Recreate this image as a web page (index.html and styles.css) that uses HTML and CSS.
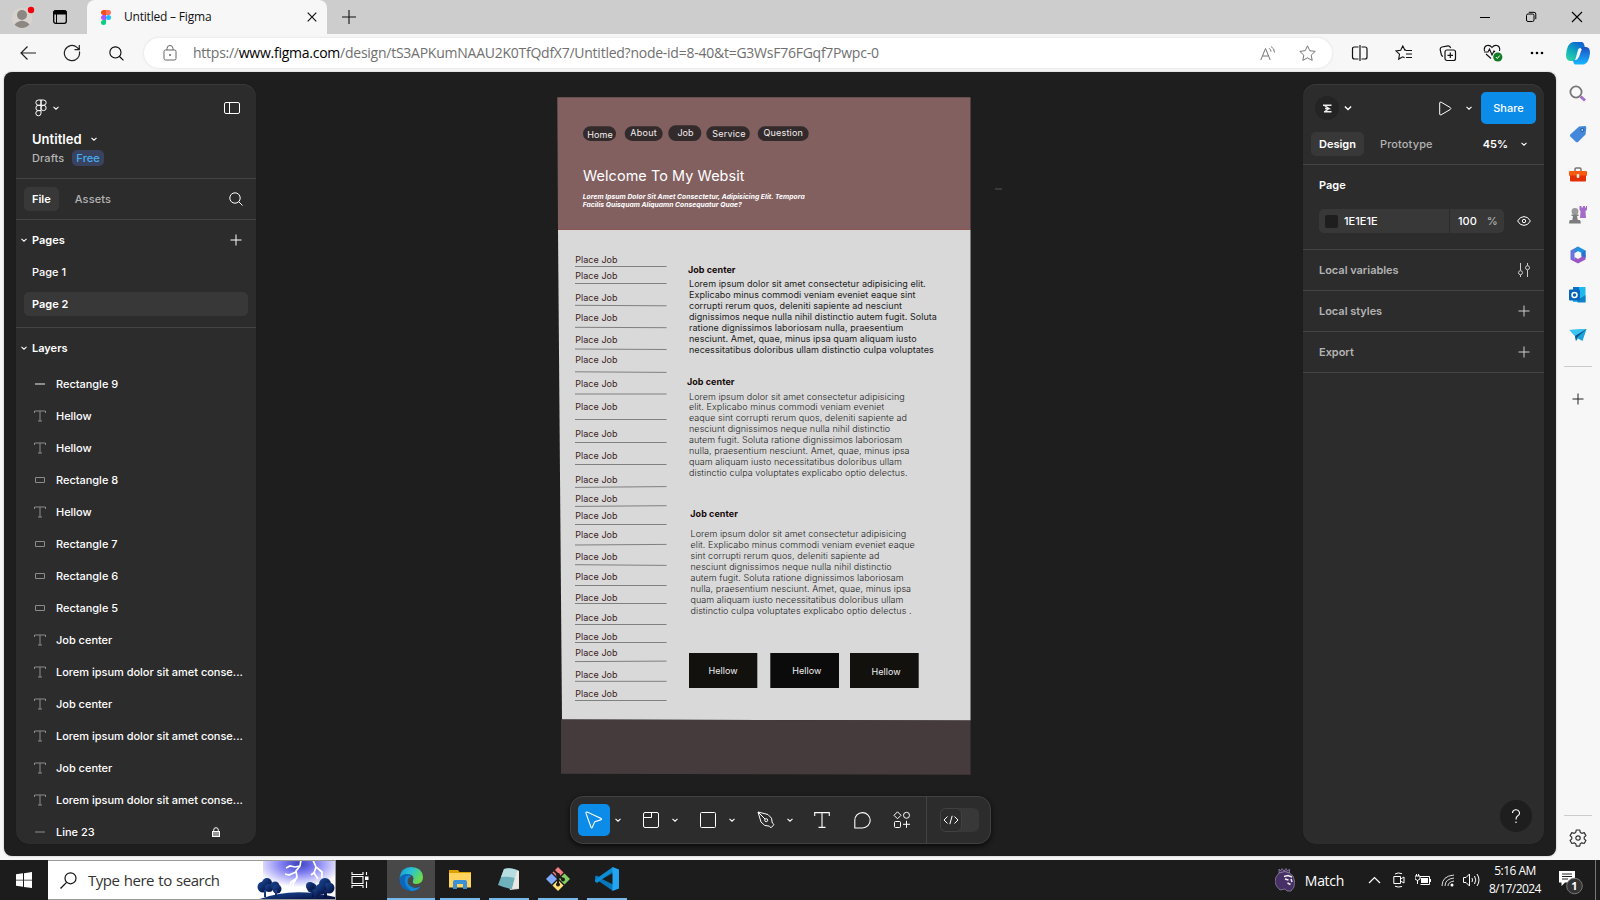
FILE: index.html
```html
<!DOCTYPE html>
<html lang="en">
<head>
<meta charset="utf-8">
<title>Untitled – Figma</title>
<link rel="stylesheet" href="styles.css">
</head>
<body>
<svg class="defs" width="0" height="0">
  <defs>
    <symbol id="chev" viewBox="0 0 8 8"><path d="M1.500 2.800 4 5.200 6.500 2.800" fill="none" stroke="currentColor" stroke-width="1.100"/></symbol>
    <symbol id="plus" viewBox="0 0 12 12"><path d="M6 .5v11M.5 6h11" fill="none" stroke="currentColor"/></symbol>
    <symbol id="mag" viewBox="0 0 14 14"><circle cx="6" cy="6" r="5.200" fill="none" stroke="currentColor"/><path d="m9.800 9.800 3.700 3.700" stroke="currentColor"/></symbol>
    <symbol id="lt" viewBox="0 0 12 12"><path d="M.5 3V1h11v2M6 1v10M4 11h4" fill="none" stroke="currentColor"/></symbol>
    <symbol id="lr" viewBox="0 0 12 12"><path d="M1.500 3.500h9v5h-9z" fill="none" stroke="currentColor"/></symbol>
    <symbol id="ll" viewBox="0 0 12 12"><path d="M1 6h10" stroke="currentColor"/></symbol>
    <symbol id="lb" viewBox="0 0 12 12"><path d="M1 6h10" stroke="currentColor" stroke-width="2"/></symbol>
  </defs>
</svg>

<header class="tabstrip">
  <svg class="avatar" width="24" height="26" viewBox="0 0 24 26"><circle cx="11" cy="14" r="10.500" fill="#d8d3cf"/><circle cx="11" cy="11" r="5" fill="#8d8782"/><path d="M3.500 20.500Q11 13 18.500 20.500A10 10 0 0 1 3.500 20.500" fill="#8d8782"/><circle cx="20" cy="6" r="3.200" fill="#f60010"/></svg>
  <svg class="wsicon" width="14" height="14" viewBox="0 0 14 14"><rect x=".7" y=".7" width="12.600" height="12.600" rx="2" fill="none" stroke="#000" stroke-width="1.300"/><path d="M1 1h12v3H1zM3.500 4v9" stroke="#000"/></svg>
  <div class="tab">
    <svg width="10" height="15" viewBox="0 0 10 15"><path d="M5 0H2.500a2.500 2.500 0 0 0 0 5H5z" fill="#f24e1e"/><path d="M5 0h2.500a2.500 2.500 0 0 1 0 5H5z" fill="#ff7262"/><path d="M5 5H2.500a2.500 2.500 0 0 0 0 5H5z" fill="#a259ff"/><circle cx="7.500" cy="7.500" r="2.500" fill="#1abcfe"/><path d="M5 10H2.500A2.500 2.500 0 1 0 5 12.500z" fill="#0acf83"/></svg>
    <span class="tabtitle">Untitled – Figma</span>
    <svg width="10" height="10" viewBox="0 0 10 10"><path d="m.7.7 8.600 8.600M9.300.7.7 9.300" stroke="#111" stroke-width="1.200"/></svg>
  </div>
  <svg class="newtab" width="14" height="14" viewBox="0 0 14 14"><path d="M7 0v14M0 7h14" stroke="#111" stroke-width="1.100"/></svg>
  <div class="winctl">
    <svg width="12" height="12" viewBox="0 0 12 12"><path d="M1 6.500h10" stroke="#000"/></svg>
    <svg width="12" height="12" viewBox="0 0 12 12"><rect x="1.500" y="3" width="7.500" height="7.500" rx="1.500" fill="none" stroke="#000"/><path d="M3.800 1.300H9q1.800 0 1.800 1.800v5" fill="none" stroke="#000"/></svg>
    <svg width="12" height="12" viewBox="0 0 12 12"><path d="m1 1 10 10M11 1 1 11" stroke="#000" stroke-width="1.100"/></svg>
  </div>
</header>

<div class="navbar">
  <svg class="back" width="16" height="14" viewBox="0 0 16 14"><path d="M16 7H1M7.500.5 1 7l6.500 6.500" fill="none" stroke="#222" stroke-width="1.200"/></svg>
  <svg class="reload" width="18" height="18" viewBox="0 0 18 18"><path d="M16.400 7.500A7.600 7.600 0 1 1 14 3.400L16.300 5.500M16.300 1v4.700h-4.800" fill="none" stroke="#222" stroke-width="1.200"/></svg>
  <svg class="find" width="15" height="15"><use href="#mag"/></svg>
  <div class="address">
    <svg width="14" height="16" viewBox="0 0 14 16"><rect x="1" y="5" width="12" height="10" rx="1.500" fill="none" stroke="#666"/><path d="M4 5V3.500a3 3 0 0 1 6 0V5" fill="none" stroke="#666"/><circle cx="7" cy="10" r="1" fill="#666"/></svg>
    <span class="url">https://<b>www.figma.com</b>/design/tS3APKumNAAU2K0TfQdfX7/Untitled?node-id=8-40&amp;t=G3WsF76FGqf7Pwpc-0</span>
    <svg class="aloud" width="16" height="15" viewBox="0 0 16 15"><path d="M.8 14 5.500 2.500 10.200 14M2.500 10h6M9 2.200q2 1.300 2 3.500M11 .5q3.500 2 3.500 6" fill="none" stroke="#777"/></svg>
    <svg width="17" height="16" viewBox="0 0 17 16"><path d="m8.500.8 2.300 4.900 5.400.7-4 3.700 1 5.300-4.700-2.600-4.700 2.600 1-5.300-4-3.700 5.400-.7z" fill="none" stroke="#777"/></svg>
  </div>
  <div class="edgeicons">
    <svg width="18" height="16" viewBox="0 0 18 16"><path d="M7.500 2H3.500Q1.500 2 1.500 4v8q0 2 2 2h4M10.500 2h3.500q2 0 2 2v8q0 2-2 2h-3.500M9 0v16" fill="none" stroke="#111" stroke-width="1.200"/></svg>
    <svg width="18" height="16" viewBox="0 0 18 16"><path d="M11 4.700 9.800 5 7.800.9 5.700 5.200l-4.800.7 3.600 3.300-.8 4.900 4.100-2.300 1.800 1M10.500 5.500H17M11 9h6M11 12.500h6" fill="none" stroke="#111" stroke-width="1.100"/></svg>
    <svg width="18" height="17" viewBox="0 0 18 17"><rect x="6" y="5" width="10.500" height="10.500" rx="2" fill="none" stroke="#111" stroke-width="1.200"/><path d="M11.300 7.500v5.500M8.500 10.300H14M4 11.500Q2.700 11 2.300 9.500L1.200 4.600Q1 2.500 3 2l6-1.200q2-.2 2.700 2.200" fill="none" stroke="#111" stroke-width="1.200"/></svg>
    <svg width="20" height="18" viewBox="0 0 20 18"><path d="M1.500 7Q.5 2.500 4 1.500 7 .8 9 3.500 11 .8 14 1.500q3.500 1 2.500 5.500M1 8h4l1.500-3 2.500 6 2-4 1 1M3 10l5 4.500" fill="none" stroke="#111" stroke-width="1.100"/><circle cx="14.800" cy="13" r="4.600" fill="#107c25"/><path d="m12.800 13 1.500 1.500 2.500-3" fill="none" stroke="#fff"/></svg>
    <svg width="16" height="16" viewBox="0 0 16 16"><circle cx="3" cy="8" r="1.300"/><circle cx="8" cy="8" r="1.300"/><circle cx="13" cy="8" r="1.300"/></svg>
  </div>
  <svg class="copilot" width="24" height="23" viewBox="0 0 24 23"><defs><linearGradient id="cg" x1="0" y1="1" x2=".6" y2="0"><stop stop-color="#35d9a0"/><stop offset=".5" stop-color="#10aebd"/><stop offset="1" stop-color="#1067d4"/></linearGradient><linearGradient id="ch" x1="0" y1="0" x2="0" y2="1"><stop stop-color="#1a4fc4"/><stop offset="1" stop-color="#18b7ff"/></linearGradient></defs><path d="M7 0h9q2 0 3 6h-4.500q-2 0-2.500 2l-2.500 9q-.8 2-3 2H5Q0 19 0 13 1 1 7 0" fill="url(#cg)"/><path d="M18 5h2q4 0 4 6-1 10-6 11.500H9.500q-2 0-2.500-4.500h2.500q2 0 2.500-2L14.500 7q.8-2 3.500-2" fill="url(#ch)"/><path d="M12.800 7h3l-2.600 7.500q-.7 2-3 2z" fill="#f7f7f7"/></svg>
</div>

<div class="main">
  <div class="app">
    <aside class="panel left">
      <div class="head">
        <svg width="12" height="18" viewBox="0 0 12 18"><path d="M6 1H3.500a2.600 2.600 0 0 0 0 5.300H6zM6 1h2.500a2.600 2.600 0 0 1 0 5.300H6zM6 6.300H3.500a2.600 2.600 0 0 0 0 5.300H6zM8.500 6.300a2.600 2.600 0 1 1 0 5.300 2.600 2.600 0 0 1 0-5.300M6 11.600H3.500A2.600 2.600 0 1 0 6 14.200z" fill="none" stroke="#fff"/></svg>
        <svg class="c1" width="8" height="8"><use href="#chev"/></svg>
        <svg class="end" width="16" height="12" viewBox="0 0 16 12"><rect x=".5" y=".5" width="15" height="11" rx="1.500" fill="none" stroke="#fff"/><path d="M5.500.5v11" stroke="#fff"/></svg>
      </div>
      <div class="fname"><b>Untitled</b><svg width="8" height="8"><use href="#chev"/></svg></div>
      <div class="drafts"><span>Drafts</span><span class="free">Free</span></div>
      <div class="ftabs"><span class="pill">File</span><span class="dim">Assets</span><svg width="14" height="14"><use href="#mag"/></svg></div>
      <div class="section pages"><svg class="c2" width="8" height="8"><use href="#chev"/></svg><b>Pages</b><svg class="add" width="12" height="12"><use href="#plus"/></svg></div>
      <div class="page">Page 1</div>
      <div class="page"><b class="sel">Page 2</b></div>
      <div class="section layers"><svg class="c2" width="8" height="8"><use href="#chev"/></svg><b>Layers</b></div>
      <div class="rows">
        <div class="row"><svg width="12" height="12"><use href="#lb"/></svg>Rectangle 9</div>
        <div class="row"><svg width="12" height="12"><use href="#lt"/></svg>Hellow</div>
        <div class="row"><svg width="12" height="12"><use href="#lt"/></svg>Hellow</div>
        <div class="row"><svg width="12" height="12"><use href="#lr"/></svg>Rectangle 8</div>
        <div class="row"><svg width="12" height="12"><use href="#lt"/></svg>Hellow</div>
        <div class="row"><svg width="12" height="12"><use href="#lr"/></svg>Rectangle 7</div>
        <div class="row"><svg width="12" height="12"><use href="#lr"/></svg>Rectangle 6</div>
        <div class="row"><svg width="12" height="12"><use href="#lr"/></svg>Rectangle 5</div>
        <div class="row"><svg width="12" height="12"><use href="#lt"/></svg>Job center</div>
        <div class="row"><svg width="12" height="12"><use href="#lt"/></svg>Lorem ipsum dolor sit amet conse...</div>
        <div class="row"><svg width="12" height="12"><use href="#lt"/></svg>Job center</div>
        <div class="row"><svg width="12" height="12"><use href="#lt"/></svg>Lorem ipsum dolor sit amet conse...</div>
        <div class="row"><svg width="12" height="12"><use href="#lt"/></svg>Job center</div>
        <div class="row"><svg width="12" height="12"><use href="#lt"/></svg>Lorem ipsum dolor sit amet conse...</div>
        <div class="row"><svg width="12" height="12"><use href="#ll"/></svg>Line 23<svg class="lock" width="8" height="10" viewBox="0 0 8 10"><rect x=".5" y="4.500" width="7" height="5" fill="#999" stroke="#fff"/><path d="M1.700 4.500V3a2.300 2.300 0 0 1 4.600 0v1.500" fill="none" stroke="#fff"/></svg></div>
      </div>
    </aside>

    <main class="canvas">
      <svg width="1047" height="788" viewBox="256 72 1047 788">
        <path d="M557.300 97.300H970.500V230H558z" fill="#826060"/>
        <path d="M558 230H970.500V720.500L562 719.500z" fill="#d9d9d9"/>
        <path d="M558 229.500H970.500" stroke="#8d5650"/>
        <path d="M561 719.500 970.500 720.500V774.800L561 773.700z" fill="#463b3c"/>
        <path d="M995 189h7" stroke="#555"/>
        <g fill="#332b2b">
          <rect x="583" y="126.300" width="33" height="14.700" rx="7.300"/><rect x="624.700" y="126.300" width="38" height="14.700" rx="7.300"/><rect x="668.300" y="125.300" width="33" height="15.700" rx="7.500"/><rect x="706.300" y="126.300" width="43.500" height="14.700" rx="7.300"/><rect x="757.700" y="126.300" width="51" height="14.700" rx="7.300"/>
        </g>
        <g class="art nav">
          <text x="587.300" y="137.500" textLength="25.500">Home</text><text x="630.200" y="136.300" textLength="26.500">About</text><text x="677.500" y="136.300" textLength="16">Job</text><text x="712.300" y="137" textLength="33.300">Service</text><text x="763.500" y="136.400" textLength="39.300">Question</text>
        </g>
        <text class="art title" x="583" y="181" textLength="161.500">Welcome To My Websit</text>
        <g class="art sub"><text x="582.700" y="199" textLength="222">Lorem Ipsum Dolor Sit Amet Consectetur, Adipisicing Elit. Tempora</text><text x="582.700" y="207" textLength="159">Facilis Quisquam Aliquamn Consequatur Quae?</text></g>
        <path d="M575 266.500h91.500M575 283.500h91.500M575 305.300l91.500.5M575 327.300l91.500.4M575 349l91.500.5M575 371.800l91.500.6M575 394h91.500M575 419.500h91.500M575 442.500h91.500M575 464.500h91.500M575 487.400l91.500-.8M575 506.400l91.500-.7M575 524.500h91.500M575 545l91.500-.6M575 564.700l91.500.7M575 585.500h91.500M575 603.500h91.500M575 624.500h91.500M575 642.500h91.500M575 661.600l91.500-.5M575 681.300h91.500M575 700.500h91.500" stroke="#808080" stroke-width="1" fill="none"/>
        <g class="art job">
          <text x="575.300" y="262.500">Place Job</text><text x="575.300" y="279">Place Job</text><text x="575.300" y="300.700">Place Job</text><text x="575.300" y="321">Place Job</text><text x="575.300" y="343">Place Job</text><text x="575.300" y="363">Place Job</text><text x="575.300" y="386.700">Place Job</text><text x="575.300" y="410">Place Job</text><text x="575.300" y="436.700">Place Job</text><text x="575.300" y="459">Place Job</text><text x="575.300" y="482.500">Place Job</text><text x="575.300" y="502">Place Job</text><text x="575.300" y="519">Place Job</text><text x="575.300" y="538">Place Job</text><text x="575.300" y="560.400">Place Job</text><text x="575.300" y="579.500">Place Job</text><text x="575.300" y="601">Place Job</text><text x="575.300" y="621.400">Place Job</text><text x="575.300" y="640">Place Job</text><text x="575.300" y="656.400">Place Job</text><text x="575.300" y="677.700">Place Job</text><text x="575.300" y="697">Place Job</text>
        </g>
        <g class="art hd"><text x="688" y="273" textLength="47.500">Job center</text><text x="687" y="385" textLength="47.500">Job center</text><text x="690.300" y="517" textLength="47.500">Job center</text></g>
        <g class="art para">
          <text x="689" y="287.400">Lorem ipsum dolor sit amet consectetur adipisicing elit.</text><text x="689" y="298.400">Explicabo minus commodi veniam eveniet eaque sint</text><text x="689" y="309.400">corrupti rerum quos, deleniti sapiente ad nesciunt</text><text x="689" y="320.300">dignissimos neque nulla nihil distinctio autem fugit. Soluta</text><text x="689" y="331.200">ratione dignissimos laboriosam nulla, praesentium</text><text x="689" y="342.100">nesciunt. Amet, quae, minus ipsa quam aliquam iusto</text><text x="689" y="353">necessitatibus doloribus ullam distinctio culpa voluptates</text>
        </g>
        <g class="art para light">
          <text x="689" y="399.500">Lorem ipsum dolor sit amet consectetur adipisicing</text><text x="689" y="410.400">elit. Explicabo minus commodi veniam eveniet</text><text x="689" y="421.300">eaque sint corrupti rerum quos, deleniti sapiente ad</text><text x="689" y="432.200">nesciunt dignissimos neque nulla nihil distinctio</text><text x="689" y="443.100">autem fugit. Soluta ratione dignissimos laboriosam</text><text x="689" y="454">nulla, praesentium nesciunt. Amet, quae, minus ipsa</text><text x="689" y="464.900">quam aliquam iusto necessitatibus doloribus ullam</text><text x="689" y="475.800">distinctio culpa voluptates explicabo optio delectus.</text>
          <text x="690.500" y="537.300">Lorem ipsum dolor sit amet consectetur adipisicing</text><text x="690.500" y="548.200">elit. Explicabo minus commodi veniam eveniet eaque</text><text x="690.500" y="559.100">sint corrupti rerum quos, deleniti sapiente ad</text><text x="690.500" y="570">nesciunt dignissimos neque nulla nihil distinctio</text><text x="690.500" y="580.900">autem fugit. Soluta ratione dignissimos laboriosam</text><text x="690.500" y="591.800">nulla, praesentium nesciunt. Amet, quae, minus ipsa</text><text x="690.500" y="602.700">quam aliquam iusto necessitatibus doloribus ullam</text><text x="690.500" y="613.600">distinctio culpa voluptates explicabo optio delectus .</text>
        </g>
        <path d="M689 653h68.300v35H689zM850 653h68.700v35H850z" fill="#12110e"/><path d="M770.300 653H839v35h-68.700z" fill="#0b0b0b"/>
        <g class="art btn"><text x="708.500" y="674.200" textLength="29">Hellow</text><text x="792.300" y="674.200" textLength="29">Hellow</text><text x="871.500" y="674.700" textLength="29">Hellow</text></g>
      </svg>
      <div class="tools">
        <span class="active"><svg width="20" height="20" viewBox="0 0 20 20"><path d="M2 3.200 7 17.300q.7 1.200 1.300 0l2.500-5.700 6-1.700q1.500-.6.3-1.500L3.200 2Q1.700 1.800 2 3.200z" fill="none" stroke="#fff" stroke-width="1.100"/></svg></span>
        <svg class="tc" width="8" height="8"><use href="#chev"/></svg>
        <svg class="t2" width="16" height="16" viewBox="0 0 16 16"><rect x=".5" y=".5" width="15" height="15" rx="1.500" fill="none" stroke="#fff"/><path d="M.5 5.500h8v-5" fill="none" stroke="#fff"/></svg>
        <svg class="tc" width="8" height="8"><use href="#chev"/></svg>
        <svg class="t2" width="16" height="16" viewBox="0 0 16 16"><rect x=".5" y=".5" width="15" height="15" rx="1" fill="none" stroke="#fff"/></svg>
        <svg class="tc" width="8" height="8"><use href="#chev"/></svg>
        <svg class="t3" width="18" height="18" viewBox="0 0 18 18"><path d="M1 1l10 2.500 3.500 3.700.8 4.800 1.700 1.500-3 3.300-1.700-1.600-4.600-.8L4 11zM1 1l7 7" fill="none" stroke="#fff" stroke-linejoin="round"/><circle cx="9.200" cy="9.200" r="1.500" fill="none" stroke="#fff"/></svg>
        <svg class="tc" width="8" height="8"><use href="#chev"/></svg>
        <svg class="t4" width="16" height="16" viewBox="0 0 16 16"><path d="M.7 4V.6h14.600V4M8 .6v14.800M4.500 15.400h7" fill="none" stroke="#fff" stroke-width="1.100"/></svg>
        <svg class="t5" width="17" height="17" viewBox="0 0 17 17"><path d="M.8 16V8.500a7.700 7.700 0 1 1 7.700 7.500z" fill="none" stroke="#fff" stroke-width="1.100" stroke-linejoin="round"/></svg>
        <svg class="t6" width="18" height="18" viewBox="0 0 18 18"><path d="m4.500.8 3.500 3.500-3.500 3.500L1 4.300zM13.500 9.800v7M10 13.300h7" fill="none" stroke="#fff"/><circle cx="13.500" cy="4.300" r="3" fill="none" stroke="#fff"/><rect x="1.500" y="10.500" width="6" height="6" rx="1" fill="none" stroke="#fff"/></svg>
        <i class="sep"></i>
        <span class="dev"><span class="knob"><svg width="16" height="10" viewBox="0 0 16 10"><path d="M4.500 1.500 1 5l3.500 3.500M11.500 1.500 15 5l-3.500 3.500M9.200.8 6.800 9.200" fill="none" stroke="#fff"/></svg></span></span>
      </div>
    </main>

    <aside class="panel right">
      <div class="rhead">
        <span class="sigma"><svg width="9" height="9" viewBox="0 0 9 9"><path d="M0 1.200h8.500M1.500 1.500 6 4.500H2M1 7.700h7.500M6 4.500 2 7.500" fill="none" stroke="#eee" stroke-width="1.400"/></svg></span>
        <svg class="rc" width="10" height="10"><use href="#chev"/></svg>
        <svg class="play" width="13" height="15" viewBox="0 0 13 15"><path d="M.7 2v11q.2 1.500 1.500.8l9-5.300q1.200-1 0-2l-9-5.300Q.9.500.7 2z" fill="none" stroke="#fff"/></svg>
        <svg class="rc2" width="8" height="8"><use href="#chev"/></svg>
        <span class="share">Share</span>
      </div>
      <div class="rtabs"><span class="pill">Design</span><span class="dim">Prototype</span><b>45%</b><svg width="8" height="8"><use href="#chev"/></svg></div>
      <div class="rpage">
        <b>Page</b>
        <div class="fill"><div class="box"><i></i><span class="hex">1E1E1E</span><span class="op">100</span><span class="pc">%</span></div><svg width="14" height="10" viewBox="0 0 14 10"><path d="M.6 5Q3 .6 7 .6T13.400 5Q11 9.400 7 9.400T.6 5z" fill="none" stroke="#fff"/><circle cx="7" cy="5" r="1.700" fill="none" stroke="#fff"/></svg></div>
      </div>
      <div class="rsec">Local variables<svg width="12" height="14" viewBox="0 0 12 14"><path d="M2.500 0v7.500M2.500 12v2M9.500 0v2.500M9.500 7v7" stroke="#ccc"/><circle cx="2.500" cy="9.700" r="2" fill="none" stroke="#ccc"/><circle cx="9.500" cy="4.700" r="2" fill="none" stroke="#ccc"/></svg></div>
      <div class="rsec">Local styles<svg width="12" height="12"><use href="#plus"/></svg></div>
      <div class="rsec">Export<svg width="12" height="12"><use href="#plus"/></svg></div>
      <span class="help"><svg width="10" height="14" viewBox="0 0 10 14"><path d="M1.500 4a3.500 3.300 0 1 1 5 3Q5 8 5 10.500" fill="none" stroke="#fff" stroke-width="1.100"/><circle cx="5" cy="13.200" r=".8" fill="#fff"/></svg></span>
    </aside>
  </div>

  <div class="edgebar">
    <svg width="18" height="18" viewBox="0 0 18 18"><circle cx="7" cy="7" r="5.600" fill="#fafafa" stroke="#777" stroke-width="1.800"/><path d="m11.500 11.500 4.500 4" stroke="#a66bcb" stroke-width="3"/></svg>
    <svg width="18" height="18" viewBox="0 0 18 18"><path d="M10 1.500 16 1q1.500 0 1.300 2L16.500 9.500 9 17q-1 .6-2 0L1.300 11.500q-.8-1 0-2z" fill="#4488dc"/><circle cx="13.300" cy="5" r="1.600" fill="#a8c8f4" stroke="#24579e"/></svg>
    <svg width="18" height="18" viewBox="0 0 18 18"><path d="M6 6V4.200Q6 3 7.200 3h3.600Q12 3 12 4.200V6" fill="none" stroke="#777" stroke-width="1.500"/><rect x="0" y="6" width="18" height="5" rx="1" fill="#f85a10"/><path d="M1 10.500h16v5q0 1-1 1H2q-1 0-1-1z" fill="#e22f06"/><rect x="7.700" y="9" width="2.600" height="4" rx="1" fill="#eee"/></svg>
    <svg width="18" height="18" viewBox="0 0 18 18"><path d="M10.500 0h2v1.500h1.500V0h2v1.500h1V0H18v4l-1.500 1 .5 7H11l.5-7-1-1z" fill="#a56bc9"/><circle cx="6" cy="5.500" r="3.400" fill="#9a9a9a"/><path d="M2.500 8.500h7V10H8l.8 4h2q1 .5 1 3.500H0Q0 14.500 1 14h2.300L4 10H2.500z" fill="#7d7d7d"/></svg>
    <svg width="18" height="18" viewBox="0 0 18 18"><path d="M9 .5 1.500 4.500v9L5.500 15V7L9 5z" fill="#6a74e0"/><path d="m9 .5 7.500 4V11l-4-2V7L9 5 6 6.800 5.500 3z" fill="#2093dc"/><path d="M1.500 13.500 9 17.500l7.500-4V9l-4 .5V11L9 13l-3.500-2v2.500z" fill="#9a57c4"/><path d="M16.500 4.500V12l-4-2V7z" fill="#2b6fd0"/></svg>
    <svg width="18" height="18" viewBox="0 0 18 18"><path d="M4 1h12.500v15H4z" fill="#20b9ef"/><path d="M4 1h6v8H4z" fill="#0873ca"/><path d="m16.500 9-8 5v2.500h8z" fill="#1080c8"/><rect x="0" y="3.500" width="11" height="11" rx="1" fill="#0864b8"/><circle cx="5.500" cy="9" r="2.500" fill="none" stroke="#fff" stroke-width="1.500"/></svg>
    <svg width="18" height="18" viewBox="0 0 18 18"><path d="M.5 4 17.500 3l-4 12-4.500-2.500L7 15 6 10z" fill="#1ba2dd"/><path d="M.5 4 17.500 3 6 10z" fill="#39c4f2"/><path d="M17.500 3 6 10l1 5 1-3.500z" fill="#0b5688"/></svg>
    <i class="rule"></i>
    <svg class="eadd" width="12" height="12"><use href="#plus"/></svg>
    <i class="rule low"></i>
    <svg class="gear" width="18" height="18" viewBox="0 0 18 18"><path d="m7.300 1 3.400 0 .6 2.400 1.500.9 2.400-.7 1.700 3L15.200 8.200v1.700l1.700 1.600-1.700 3-2.400-.7-1.500.9-.6 2.400H7.300l-.6-2.400-1.500-.9-2.400.7-1.700-3L2.800 9.900V8.200L1.100 6.600l1.700-3 2.400.7 1.500-.9z" fill="none" stroke="#333" stroke-width="1.200" stroke-linejoin="round"/><circle cx="9" cy="9" r="2.200" fill="none" stroke="#333" stroke-width="1.200"/></svg>
  </div>
</div>

<footer class="taskbar">
  <span class="start"><svg width="16" height="16" viewBox="0 0 16 16"><path d="M0 2.300 7 1.300v6.400H0zM8 1.200 16 0v7.700H8zM0 8.500h7v6.300L0 13.800zM8 8.500h8V16l-8-1.100z" fill="#fff"/></svg></span>
  <div class="search">
    <svg width="17" height="17" viewBox="0 0 17 17"><circle cx="10.500" cy="6.300" r="5.500" fill="none" stroke="#111" stroke-width="1.200"/><path d="M6.600 10.400.5 16.500" stroke="#111" stroke-width="1.300"/></svg>
    <span>Type here to search</span>
    <svg class="storm" width="80" height="40" viewBox="0 0 80 40"><defs><radialGradient id="sg" cx=".5" cy=".1" r=".62"><stop stop-color="#3c43b8"/><stop offset=".35" stop-color="#7776ee"/><stop offset=".65" stop-color="#b8b6fa"/><stop offset="1" stop-color="#fff"/></radialGradient><linearGradient id="tg" x1="0" x2="1" y2="1"><stop stop-color="#1b4a9a"/><stop offset="1" stop-color="#040c38"/></linearGradient></defs><rect x="8" width="72" height="38" fill="url(#sg)"/><path d="m46 0-1 6-4 5 1 6-4 7v8M45 6l-5 1-5-1-4 2M41 12l-7 3-4-1M42 18l-6 4-1 4M58 0l3 7-2 6 4 6M61 7l6 5v6M60 12l-4 3" fill="none" stroke="#fff" stroke-width="1.700"/><g fill="url(#tg)"><path d="M2 40q35-14 78-3v3z"/><circle cx="8" cy="27" r="5.500"/><circle cx="12" cy="23" r="5"/><circle cx="14" cy="28" r="4"/><circle cx="20" cy="26" r="4.500"/><circle cx="22" cy="29" r="4.500"/><circle cx="57" cy="28" r="5"/><circle cx="55" cy="26" r="4"/><circle cx="70" cy="24" r="6"/><circle cx="74" cy="28" r="5.500"/><circle cx="66" cy="29" r="5.500"/><circle cx="61" cy="33" r="4"/><path d="M9 30h2v7H9zM20 30h2v7h-2zM69 30h3v7h-3zM57 30h2v7h-2z"/></g></svg>
  </div>
  <span class="tview"><svg width="18" height="16" viewBox="0 0 18 16"><path d="M1 0v2.500h11V0M1 4.500h11v7H1zM1 16v-2.500h11V16M15.500 0v3M15.500 9.500V16" fill="none" stroke="#fff" stroke-width="1.100"/><path d="M14 4.500h3.500V8H14z" fill="#fff"/></svg></span>
  <div class="apps">
    <span class="app1"><svg width="24" height="24" viewBox="0 0 24 24"><defs><linearGradient id="e1" x1="0" x2="1" y2=".5"><stop stop-color="#1593dc"/><stop offset=".5" stop-color="#2bc3d2"/><stop offset="1" stop-color="#6cdb4b"/></linearGradient></defs><path d="M.5 11Q2 0 12 0q11 0 12 10 0 7-7 7-4 0-3-3 2-6-4-6.500Q3 7.500.5 11" fill="url(#e1)"/><path d="M.2 12Q2 7 8 7q3 0 5 2-5 0-5 6 1 6 8 6 3 0 5.500-1.500Q18 24 12 24 1 23 .2 12" fill="#0d66b8"/><path d="M7 9Q3 17 12 24q6 0 9.500-4.500Q17 22 13 20q-6-3-4-8 1-2 3.500-3Q9 8 7 9" fill="#1486d8"/></svg></span>
    <span class="app2"><svg width="22" height="20" viewBox="0 0 22 20"><path d="M0 1h9l1.500 2H22v4H0z" fill="#e0a000"/><path d="M0 4h22v14.500H0z" fill="#ffd45e"/><path d="M4 20v-7q0-2 2-2h10q2 0 2 2v7h-4v-5H8v5z" fill="#3a91d8"/></svg></span>
    <span class="app2"><svg width="24" height="24" viewBox="0 0 24 24"><path d="M8 2 22 4v18L13 23z" fill="#d3d6cf"/><path d="M7 2q6-2 13 1l-5 19Q8 21 1 18z" fill="#6fb0bd"/><path d="M7 2q6-2 13 1l-2 8Q11 9 4 10z" fill="#b5dde2"/><path d="M15 22 22 21V4l-2-1z" fill="#e9e9e2"/></svg></span>
    <span class="app2"><svg width="24" height="24" viewBox="0 0 24 24"><path d="m12 0 5.500 5.500L12 11 6.500 5.500z" fill="#f47e80"/><path d="M18.500 6.500 24 12l-5.500 5.500L13 12z" fill="#85cf62"/><path d="m12 13 5.500 5.500L12 24l-5.500-5.500z" fill="#ffdf76"/><path d="M5.500 6.500 11 12l-5.500 5.500L0 12z" fill="#80a9f8"/><path d="m8 3.500 4 4V18M12 8l5 4.500" fill="none" stroke="#201a18" stroke-width="2"/><circle cx="12" cy="8" r="2" fill="#201a18"/><circle cx="12" cy="17.500" r="2" fill="#201a18"/><circle cx="17" cy="12.500" r="2" fill="#201a18"/></svg></span>
    <span class="app2"><svg width="24" height="24" viewBox="0 0 24 24"><path d="M18 0 5.500 11 2 8.500 0 9.500v2L18 24v-6.500L7 12l11-6z" fill="#0878bd"/><path d="M0 14.500 2 16l16-12V0L0 12.500z" fill="#0c8ed4"/><path d="M17.500 0 24 2.500v19L17.500 24z" fill="#24a5f2"/></svg></span>
  </div>
  <div class="tray">
    <svg class="lion" width="20" height="24" viewBox="0 0 20 24"><path d="m4 1 1.500 2L7 .5 9 3l2-2.500L12.500 3 14.500 1v4l3.500 3 1.500 5-.5 6-3 4h-4l-2-2-5 1-3.500-4L0 14l1-5 3-4z" fill="#463065" stroke="#8c80a0" stroke-width=".8"/><path d="m4 5 6-1.500L14.500 5" fill="none" stroke="#8c80a0"/><path d="m9 8.500 4-1 4 1.500M10 11l3.500 1M16 11l1 3M12.500 15l3 1.500" fill="none" stroke="#eee" stroke-width="1.500"/></svg>
    <span class="match">Match</span>
    <svg class="up" width="13" height="8" viewBox="0 0 13 8"><path d="m1 7 5.500-5.500L12 7" fill="none" stroke="#fff" stroke-width="1.200"/></svg>
    <svg class="meet" width="12" height="16" viewBox="0 0 12 16"><path d="M2 2Q5 0 9 1.700M2 14.200q3 1.500 7 .3M.8 4.500h6.700v7H.8zM7.500 7l3.500-2v6L7.500 9" fill="none" stroke="#fff"/></svg>
    <svg class="bat" width="16" height="12" viewBox="0 0 16 12"><path d="M5 2.500h9.500v8H5.500M0 2h5v3q-2.500 3-5 0zM1.500 0v2M3.500 0v2M2.500 6v4M15.500 5v3" fill="none" stroke="#fff"/><path d="M6 4h7v5H6z" fill="#fff"/></svg>
    <svg class="wifi" width="14" height="13" viewBox="0 0 14 13"><path d="M1 12Q1 2 13 1M4 12q0-7 9-8M7 12q0-4 6-5" fill="none" stroke="#ddd"/><circle cx="11" cy="11" r="1.500" fill="#fff"/></svg>
    <svg class="vol" width="17" height="14" viewBox="0 0 17 14"><path d="M.5 4.500h2.500L6.500 1v12L3 9.500H.5zM9 5q1 2 0 4M11.500 3q2.500 4 0 8M14 1q4 6 0 12" fill="none" stroke="#fff"/></svg>
    <div class="clock"><span>5:16 AM</span><span>8/17/2024</span></div>
    <svg class="note" width="24" height="25" viewBox="0 0 24 25"><path d="M0 1h16v11.500H6L2.500 16v-3.500H0z" fill="#fff"/><path d="M3 4h10M3 6.500h10M3 9h6" stroke="#222"/><circle cx="15.500" cy="16" r="7.800" fill="#333" stroke="#777"/><text x="15.500" y="20" text-anchor="middle" class="cnt">1</text></svg>
    <i class="peek"></i>
  </div>
</footer>
</body>
</html>
```
FILE: styles.css
```css
* { box-sizing: border-box; }
body { margin: 0; width: 1600px; height: 900px; overflow: hidden; display: flex; flex-direction: column; background: #f7f7f7; font-family: "Open Sans", "Noto Sans", sans-serif; }
.defs { position: absolute; }
svg { flex: none; display: block; }

.tabstrip { height: 34px; background: #cdcdcd; display: flex; align-items: center; flex: none; }
.avatar { margin-left: 11px; }
.wsicon { margin-left: 18px; }
.tab { margin-left: 20px; width: 240px; height: 34px; background: #f7f7f7; border-radius: 8px 8px 0 0; display: flex; align-items: center; padding: 0 10px 0 14px; }
.tabtitle { margin-left: 13px; margin-top: -1px; flex: 1; font-size: 12px; letter-spacing: -.2px; color: #111; }
.newtab { margin-left: 15px; }
.winctl { margin-left: auto; display: flex; gap: 34px; padding-right: 17px; }

.navbar { height: 38px; display: flex; align-items: center; flex: none; }
.back { margin-left: 20px; }
.reload { margin-left: 27px; }
.find { margin-left: 28px; }
.address { margin-left: 20px; width: 1188px; height: 30px; background: #fff; border-radius: 15px; display: flex; align-items: center; padding: 0 16px 0 19px; box-shadow: 0 0 3px #ddd; }
.url { margin-left: 16px; margin-top: -1px; flex: 1; font-size: 14px; letter-spacing: -.25px; color: #707070; white-space: nowrap; }
.url b { color: #000; font-weight: 400; }
.aloud { margin-right: 23px; }
.edgeicons { display: flex; align-items: center; gap: 26px; margin-left: 19px; }
.copilot { margin-left: auto; margin-right: 10px; }

.main { height: 788px; display: flex; flex: none; padding-left: 4px; }
.app { width: 1552px; height: 784px; background: #1e1e1e; border-radius: 8px; display: flex; padding: 12px; flex: none; overflow: hidden; box-shadow: 0 0 2px #aaa; color: #fff; font-family: Inter, sans-serif; font-size: 11px; font-weight: 500; }
.panel { height: 760px; background: #2c2c2c; border-radius: 13px; overflow: hidden; flex: none; box-shadow: 0 0 1px #151515, inset 0 1px #3a3a3a; }
.panel b { font-weight: 600; }
.left { width: 240px; }
.head { height: 48px; display: flex; align-items: center; padding: 0 16px 0 19px; }
.head .c1 { margin-left: 5px; }
.head .end { margin-left: auto; }
.fname { height: 16px; margin-top: -1px; padding-left: 16px; display: flex; align-items: center; gap: 8px; font-size: 13px; letter-spacing: .03px; }
.drafts { height: 32px; padding: 3px 0 0 16px; display: flex; gap: 8px; line-height: 16px; color: #b5b5b5; border-bottom: 1px solid #444; letter-spacing: .1px; }
.free { height: 16px; background: #394360; color: #45aef0; border-radius: 5px; padding: 0 4px; }
.ftabs { height: 41px; border-bottom: 1px solid #444; display: flex; align-items: center; padding: 0 13px 0 8px; }
.ftabs svg { margin-left: auto; }
.pill { height: 24px; line-height: 24px; border-radius: 5px; background: #383838; padding: 0 8px; font-weight: 600; }
.dim { color: #b3b3b3; margin-left: 16px; letter-spacing: .12px; }
.section { height: 40px; display: flex; align-items: center; padding: 0 14.5px 0 4px; }
.pages { margin-bottom: -4px; }
.section b { margin-left: 4px; }
.add { margin-left: auto; }
.page { height: 32px; line-height: 32px; padding-left: 16px; display: flow-root; }
.sel { display: block; margin: 4px 8px 4px -8px; line-height: 24px; background: #383838; border-radius: 5px; padding-left: 8px; }
.layers { border-top: 1px solid #444; margin-top: 7px; height: 41px; }
.row { height: 32px; display: flex; align-items: center; padding-left: 18px; letter-spacing: -.02px; }
.row > svg:first-child { color: #8c8c8c; margin-right: 10px; }
.row .lock { margin-left: auto; margin-right: 36px; }

.canvas { width: 1047px; margin-top: -12px; position: relative; flex: none; }
.art { font-family: Inter, sans-serif; font-size: 9px; font-weight: 400; }
.nav { fill: #f3eeee; }
.title { fill: #fff; font-size: 14.4px; }
.sub { fill: #fff; font-size: 6.75px; font-weight: 700; font-style: italic; }
.job { fill: #3b1b1b; letter-spacing: .03px; }
.hd { fill: #140808; font-weight: 700; }
.para { fill: #222; letter-spacing: .04px; }
.light { font-weight: 300; letter-spacing: .06px; }
.btn { fill: #eee; }
.tools { position: absolute; left: 314px; top: 724px; width: 421px; height: 48px; background: #2c2c2c; border-radius: 13px; border: 1px solid #414141; box-shadow: 0 2px 5px #0a0a0a; display: flex; align-items: center; padding-left: 7px; }
.active { width: 32px; height: 32px; background: #0c8ce9; border-radius: 5px; display: flex; align-items: center; justify-content: center; }
.tc { margin-left: 4px; }
.t2 { margin-left: 21px; }
.t2 + .tc { margin-left: 12px; }
.t3 { margin-left: 21px; }
.t3 + .tc { margin-left: 11px; }
.t4 { margin-left: 20px; }
.t5 { margin-left: 24px; }
.t6 { margin-left: 22px; }
.sep { width: 1px; height: 46px; background: #444; margin-left: 15px; }
.dev { margin-left: 13px; width: 39px; height: 24px; border-radius: 6px; background: #383838; }
.knob { width: 22px; height: 24px; border-radius: 6px; background: #2c2c2c; border: 1px solid #414141; display: flex; align-items: center; justify-content: center; }

.right { width: 241px; position: relative; }
.rhead { height: 48px; display: flex; align-items: center; padding-left: 12px; }
.sigma { width: 24px; height: 24px; border-radius: 50%; background: #242424; display: flex; align-items: center; justify-content: center; }
.rc { margin-left: 4px; }
.play { margin-left: 86px; }
.rc2 { margin-left: 13px; }
.share { margin-left: 8px; width: 55px; height: 32px; line-height: 32px; text-align: center; background: #0c8ce9; border-radius: 5px; }
.rtabs { height: 33px; display: flex; align-items: flex-start; line-height: 24px; padding-left: 8px; border-bottom: 1px solid #444; }
.rtabs b { margin-left: auto; }
.rtabs svg { margin: 8px 16px 0 12px; }
.rpage { height: 85px; padding: 12px 13px 0 16px; border-bottom: 1px solid #444; line-height: 16px; }
.fill { display: flex; align-items: center; justify-content: space-between; margin-top: 16px; }
.box { width: 185px; height: 24px; line-height: 24px; background: #383838; border-radius: 5px; display: flex; align-items: center; }
.box i { width: 13px; height: 13px; background: #1e1e1e; margin: 0 6px; border-radius: 2px; }
.hex { width: 106px; border-right: 1px solid #2c2c2c; }
.op { margin-left: 8px; }
.pc { margin-left: 10px; color: #b3b3b3; }
.rsec { height: 41px; display: flex; align-items: center; justify-content: space-between; padding: 0 14px 0 16px; color: #b3b3b3; font-weight: 600; border-bottom: 1px solid #444; letter-spacing: -.03px; }
.rsec svg { color: #ccc; }
.help { position: absolute; right: 12px; bottom: 12px; width: 32px; height: 32px; border-radius: 50%; background: #1e1e1e; display: flex; align-items: center; justify-content: center; }

.edgebar { width: 44px; height: 784px; display: flex; flex-direction: column; align-items: center; gap: 22.2px; padding-top: 13px; }
.rule { width: 28px; height: 1px; background: #ccc; }
.eadd { color: #222; margin-top: 3px; }
.low { margin-top: auto; }
.gear { margin-bottom: 9px; margin-top: -9px; }

.taskbar { height: 40px; background: #1c1c1c; display: flex; flex: none; color: #fff; }
.start { width: 48px; display: flex; align-items: center; justify-content: center; }
.search { width: 288px; height: 40px; background: #fff; border: 1px solid #999; border-left: 0; display: flex; align-items: center; padding-left: 12px; color: #333; overflow: hidden; }
.search span { margin-left: 11px; font-size: 15px; letter-spacing: -.65px; word-spacing: 1px; letter-spacing: -.5px; white-space: nowrap; }
.storm { margin-left: auto; }
.tview { width: 51px; display: flex; align-items: center; padding-left: 15px; }
.apps { display: flex; }
.apps span { display: flex; align-items: center; justify-content: center; border-bottom: 2px solid #76b9ed; height: 40px; }
.app1 { width: 48px; background: #484848; margin-right: 5px; }
.app2 { width: 40px; margin-right: 9px; }
.tray { margin-left: auto; display: flex; align-items: center; }
.match { font-size: 14px; letter-spacing: -.3px; margin-left: 10px; }
.up { margin-left: 24px; }
.meet { margin-left: 12px; }
.bat { margin-left: 10px; }
.wifi { margin-left: 10px; }
.vol { margin-left: 8px; }
.clock { display: flex; flex-direction: column; align-items: center; font-size: 12px; line-height: 18px; margin-left: 9px; width: 52px; letter-spacing: -.55px; white-space: nowrap; }
.note { margin-left: 18px; margin-top: 5px; }
.cnt { font-size: 11px; font-weight: 700; fill: #fff; font-family: "Open Sans", sans-serif; }
.peek { width: 1px; height: 40px; background: #777; margin-left: 12px; margin-right: 4px; }
```
